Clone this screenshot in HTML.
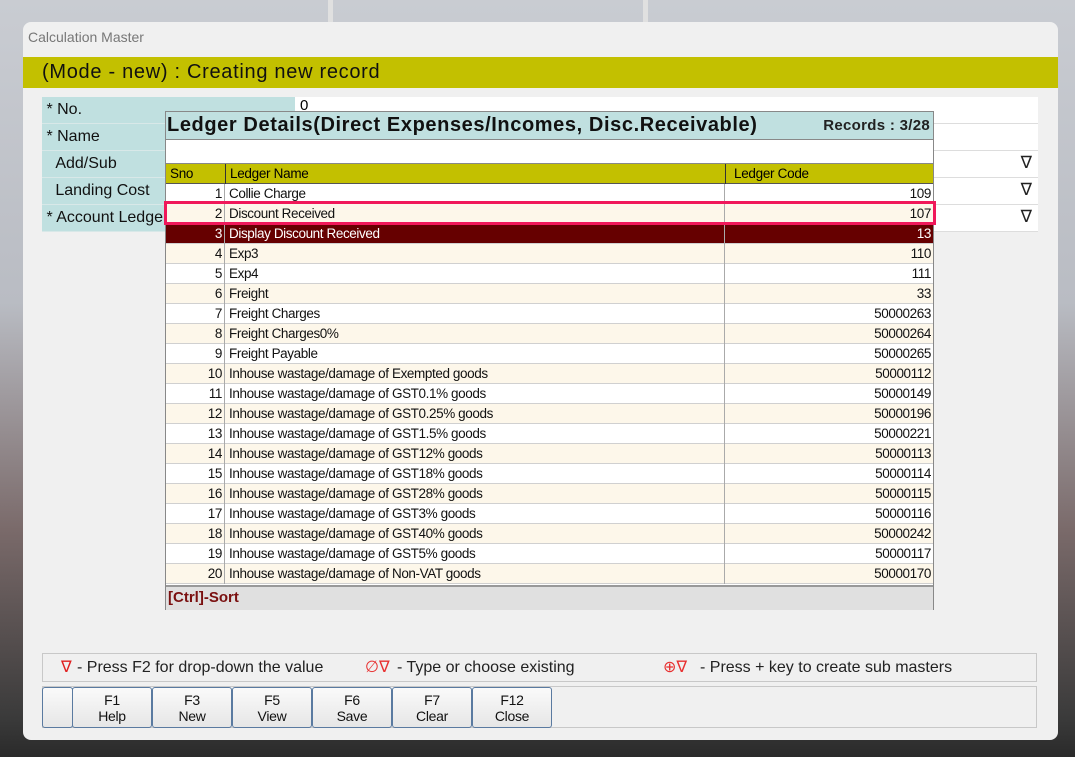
<!DOCTYPE html>
<html><head><meta charset="utf-8"><style>
*{margin:0;padding:0;box-sizing:border-box}
body{width:1075px;height:757px;overflow:hidden;position:relative;font-family:"Liberation Sans",sans-serif;
background:linear-gradient(180deg,#c9ccd2 0,#b9bcc3 40%,#7a6a6a 70%,#3a3a3a 95%,#2a2a2a 100%)}
.a{position:absolute}
#win{left:23px;top:22px;width:1035px;height:718px;background:#f0f0f0;border-radius:8px;overflow:hidden}
.lbl{position:absolute;left:19px;width:253px;height:27px;background:#c0e0e0;border-bottom:1px solid #d8e8e8;font-size:16px;color:#111;line-height:26px}
.inp{position:absolute;left:272px;width:743px;height:27px;background:#fff;border-bottom:1px solid #ddd}
.tri{position:absolute;right:6px;top:2px;font-size:17px;color:#222}
#pop{left:165px;top:111px;width:769px;height:499px;background:#fff;border:1px solid #888}
.row{position:absolute;left:0;width:767px;height:20px;font-size:13.5px;letter-spacing:-0.4px;line-height:20px;color:#111;border-bottom:1px solid #d0d0d0}
.row .s{position:absolute;left:0;width:59px;text-align:right;padding-right:2px;border-right:1px solid #aaa;height:20px}
.row .n{position:absolute;left:59px;width:500px;padding-left:4px;border-right:1px solid #aaa;height:20px}
.row .c{position:absolute;left:559px;width:208px;text-align:right;padding-right:2px;height:20px}
.btn{position:absolute;top:0;width:80px;height:41px;border:1px solid #5a7aa0;border-radius:3px;background:linear-gradient(#fafafa,#e6e6e6);font-size:14px;letter-spacing:-0.3px;text-align:center;line-height:16px;padding-top:4px;color:#111}
</style></head><body>
<div class="a" style="left:328px;top:0;width:5px;height:22px;background:#e0e0e0"></div>
<div class="a" style="left:643px;top:0;width:5px;height:22px;background:#e0e0e0"></div>
<div id="win" class="a">
 <div class="a" style="left:5px;top:7px;font-size:14px;color:#777">Calculation Master</div>
 <div class="a" style="left:0;top:35px;width:1035px;height:31px;background:#c3c000;font-size:20px;letter-spacing:0.7px;color:#111;line-height:31px;padding-left:19px">(Mode - new) : Creating new record</div>
 <div class="lbl" style="top:75px">&nbsp;* No.</div><div class="inp" style="top:75px"><span style="position:absolute;left:5px;top:0;font-size:15px">0</span></div>
 <div class="lbl" style="top:102px">&nbsp;* Name</div><div class="inp" style="top:102px"></div>
 <div class="lbl" style="top:129px">&nbsp;&nbsp;&nbsp;Add/Sub</div><div class="inp" style="top:129px"><span class="tri">∇</span></div>
 <div class="lbl" style="top:156px">&nbsp;&nbsp;&nbsp;Landing Cost</div><div class="inp" style="top:156px"><span class="tri">∇</span></div>
 <div class="lbl" style="top:183px">&nbsp;* Account Ledger</div><div class="inp" style="top:183px"><span class="tri">∇</span></div>
 <div class="a" style="left:19px;top:631px;width:995px;height:29px;border:1px solid #c8c8c8;font-size:16px;color:#222;line-height:27px">
  <span class="a" style="left:18px;color:#e02020">∇</span><span class="a" style="left:34px">- Press F2 for drop-down the value</span>
  <span class="a" style="left:322px;color:#e83030">∅∇</span><span class="a" style="left:354px">- Type or choose existing</span>
  <span class="a" style="left:620px;color:#e83030">⊕∇</span><span class="a" style="left:657px">- Press + key to create sub masters</span>
 </div>
 <div class="a" style="left:19px;top:664px;width:995px;height:42px;border:1px solid #c8c8c8">
  <div class="btn" style="left:-1px;width:31px"></div>
  <div class="btn" style="left:29px">F1<br>Help</div>
  <div class="btn" style="left:109px">F3<br>New</div>
  <div class="btn" style="left:189px">F5<br>View</div>
  <div class="btn" style="left:269px">F6<br>Save</div>
  <div class="btn" style="left:349px">F7<br>Clear</div>
  <div class="btn" style="left:429px">F12<br>Close</div>
 </div>
</div>
<div id="pop" class="a">
 <div class="a" style="left:0;top:0;width:767px;height:28px;background:#c0e0e0;border-bottom:1px solid #888">
  <span class="a" style="left:1px;top:2px;font-size:20px;letter-spacing:0.6px;font-weight:bold;color:#111">Ledger Details(Direct Expenses/Incomes, Disc.Receivable)</span>
  <span class="a" style="right:3px;top:5px;font-size:15px;letter-spacing:0.3px;font-weight:bold;color:#222">Records : 3/28</span>
 </div>
 <div class="a" style="left:0;top:51px;width:767px;height:21px;background:#c3c000;border-top:1px solid #888;border-bottom:1px solid #555;font-size:13.5px;letter-spacing:-0.3px;line-height:20px">
  <span class="a" style="left:4px">Sno</span><span class="a" style="left:59px;height:20px;border-left:1px solid #333;padding-left:4px">Ledger Name</span><span class="a" style="left:559px;height:20px;border-left:1px solid #333;padding-left:8px">Ledger Code</span>
 </div>
 <div id="rows"></div>
 <div class="a" style="left:0;top:473px;width:767px;height:25px;background:#e0e0e0;border-top:2px solid #999;font-size:15px;font-weight:bold;color:#7a1010;line-height:22px;padding-left:2px">[Ctrl]-Sort</div>
</div>
<div class="a" style="left:164px;top:201px;width:772px;height:24px;border:3px solid #f0185a"></div>
<script>
var d=[["Collie Charge",109],["Discount Received",107],["Display Discount Received",13],["Exp3",110],["Exp4",111],["Freight",33],["Freight Charges",50000263],["Freight Charges0%",50000264],["Freight Payable",50000265],["Inhouse wastage/damage of Exempted goods",50000112],["Inhouse wastage/damage of GST0.1% goods",50000149],["Inhouse wastage/damage of GST0.25% goods",50000196],["Inhouse wastage/damage of GST1.5% goods",50000221],["Inhouse wastage/damage of GST12% goods",50000113],["Inhouse wastage/damage of GST18% goods",50000114],["Inhouse wastage/damage of GST28% goods",50000115],["Inhouse wastage/damage of GST3% goods",50000116],["Inhouse wastage/damage of GST40% goods",50000242],["Inhouse wastage/damage of GST5% goods",50000117],["Inhouse wastage/damage of Non-VAT goods",50000170]];
var h="";d.forEach(function(r,i){var bg=i==2?"#660000":(i%2?"#fdf7ea":"#fff");var col=i==2?"#fff":"#111";
h+='<div class="row" style="top:'+(72+i*20)+'px;background:'+bg+';color:'+col+'"><span class="s">'+(i+1)+'</span><span class="n">'+r[0]+'</span><span class="c">'+r[1]+'</span></div>';});
document.getElementById("rows").innerHTML=h;
</script>
</body></html>
